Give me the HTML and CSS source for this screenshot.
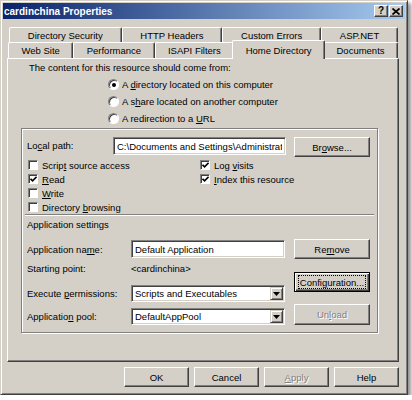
FILE: index.html
```html
<!DOCTYPE html>
<html lang="en">
<head>
    <meta charset="UTF-8">
    <title>cardinchina Properties</title>
    <link rel="stylesheet" href="styles.css">
</head>
<body>
    <div class="window">
        <div class="titlebar">
            <span class="title">cardinchina Properties</span>
            <div class="caption-buttons">
                <span class="cap-btn">?</span>
                <span class="cap-btn">
                    <svg width="8" height="7" viewBox="0 0 8 7"><path d="M0.5 0.5 L7.5 6.5 M7.5 0.5 L0.5 6.5" stroke="#000" stroke-width="1.7"/></svg>
                </span>
            </div>
        </div>

        <div class="tabs">
            <div class="tab-row back">
                <div class="tab">Directory Security</div>
                <div class="tab">HTTP Headers</div>
                <div class="tab">Custom Errors</div>
                <div class="tab">ASP.NET</div>
            </div>
            <div class="tab-row front">
                <div class="tab">Web Site</div>
                <div class="tab">Performance</div>
                <div class="tab">ISAPI Filters</div>
                <div class="tab selected">Home Directory</div>
                <div class="tab">Documents</div>
            </div>
        </div>

        <div class="page">
            <div class="intro">The content for this resource should come from:</div>
            <div class="radios">
                <div class="radio-row"><span class="radio checked"></span><span>A <u>d</u>irectory located on this computer</span></div>
                <div class="radio-row"><span class="radio"></span><span>A s<u>h</u>are located on another computer</span></div>
                <div class="radio-row"><span class="radio"></span><span>A redirection to a <u>U</u>RL</span></div>
            </div>

            <div class="group">
                <div class="path-row">
                    <span class="path-label">Lo<u>c</u>al path:</span>
                    <input class="field path-field" value="C:\Documents and Settings\Administrator\My Documents">
                    <button class="btn">Br<u>o</u>wse...</button>
                </div>

                <div class="checks">
                    <div class="check-col left">
                        <div class="check-row"><span class="checkbox"></span><span>Scrip<u>t</u> source access</span></div>
                        <div class="check-row"><span class="checkbox"><svg width="7" height="7" viewBox="0 0 7 7"><path d="M0.5 2.8 L2.6 4.9 L6.6 0.8" fill="none" stroke="#000" stroke-width="1.7"/></svg></span><span><u>R</u>ead</span></div>
                        <div class="check-row"><span class="checkbox"></span><span><u>W</u>rite</span></div>
                        <div class="check-row"><span class="checkbox"></span><span>Directory <u>b</u>rowsing</span></div>
                    </div>
                    <div class="check-col">
                        <div class="check-row"><span class="checkbox"><svg width="7" height="7" viewBox="0 0 7 7"><path d="M0.5 2.8 L2.6 4.9 L6.6 0.8" fill="none" stroke="#000" stroke-width="1.7"/></svg></span><span>Log <u>v</u>isits</span></div>
                        <div class="check-row"><span class="checkbox"><svg width="7" height="7" viewBox="0 0 7 7"><path d="M0.5 2.8 L2.6 4.9 L6.6 0.8" fill="none" stroke="#000" stroke-width="1.7"/></svg></span><span><u>I</u>ndex this resource</span></div>
                    </div>
                </div>

                <div class="separator"></div>
                <div class="section-label">Application settings</div>

                <div class="app">
                    <div class="app-fields">
                        <div class="app-row name-row">
                            <span class="app-label">Application na<u>m</u>e:</span>
                            <input class="field app-field" value="Default Application">
                        </div>
                        <div class="app-row start-row">
                            <span class="app-label">Starting point:</span>
                            <span class="app-value">&lt;cardinchina&gt;</span>
                        </div>
                        <div class="app-row exec-row">
                            <span class="app-label">Execute <u>p</u>ermissions:</span>
                            <div class="combo">
                                <span class="combo-text">Scripts and Executables</span>
                                <span class="combo-btn"><svg width="7" height="4" viewBox="0 0 7 4"><path d="M0 0 H7 L3.5 4 Z" fill="#000"/></svg></span>
                            </div>
                        </div>
                        <div class="app-row pool-row">
                            <span class="app-label">Applicatio<u>n</u> pool:</span>
                            <div class="combo">
                                <span class="combo-text">DefaultAppPool</span>
                                <span class="combo-btn"><svg width="7" height="4" viewBox="0 0 7 4"><path d="M0 0 H7 L3.5 4 Z" fill="#000"/></svg></span>
                            </div>
                        </div>
                    </div>
                    <div class="app-buttons">
                        <button class="btn remove"><span>Re<u>m</u>ove</span></button>
                        <button class="btn default config"><span class="focus"><span>Confi<u>g</u>uration...</span></span></button>
                        <button class="btn unload" disabled><span>Un<u>l</u>oad</span></button>
                    </div>
                </div>
            </div>
        </div>

        <div class="dialog-buttons">
            <button class="btn">OK</button>
            <button class="btn">Cancel</button>
            <button class="btn" disabled><span><u>A</u>pply</span></button>
            <button class="btn">Help</button>
        </div>
    </div>
</body>
</html>
```

FILE: styles.css
```css
* {
    box-sizing: border-box;
}

body {
    margin: 0;
    background-color: #fff;
    font-family: "Liberation Sans", Arial, sans-serif;
    font-size: 9.5px;
    color: #000;
}

.window {
    width: 408px;
    height: 395px;
    background-color: #d4d0c8;
    border: 1px solid;
    border-color: #d4d0c8 #404040 #404040 #d4d0c8;
    box-shadow: inset 1px 1px #fff, inset -1px -1px #808080, 3px 3px 4px rgba(0, 0, 0, 0.45);
    padding: 2px;
}

.titlebar {
    height: 16px;
    display: flex;
    align-items: center;
    justify-content: space-between;
    padding: 0 2px 0 1px;
    background: linear-gradient(to right, #0a246a, #a6caf0);
}

.title {
    color: #fff;
    font-weight: bold;
    font-size: 10px;
}

.caption-buttons {
    display: flex;
    gap: 1px;
}

.cap-btn {
    width: 14px;
    height: 12px;
    background-color: #d4d0c8;
    border: 1px solid;
    border-color: #fff #404040 #404040 #fff;
    box-shadow: inset -1px -1px #808080;
    display: flex;
    align-items: center;
    justify-content: center;
    font-weight: bold;
    font-size: 10px;
    line-height: 1;
}

/* tabs */
.tabs {
    margin-top: 8px;
}

.tab-row {
    display: flex;
}

.tab-row.back {
    height: 15px;
    margin: 0 7px 0 6px;
}

.tab-row.front {
    height: 16px;
    margin: 0 7px 0 5px;
}

.tab {
    flex: 1 1 auto;
    padding: 0 6px;
    background-color: #d4d0c8;
    border-top: 1px solid #fff;
    border-left: 1px solid #fff;
    border-right: 1px solid #404040;
    border-radius: 2px 2px 0 0;
    box-shadow: inset -1px 0 #808080;
    display: flex;
    align-items: center;
    justify-content: center;
    white-space: nowrap;
}

.tab.selected {
    height: 19px;
    margin: -2px -2px -1px;
    position: relative;
    z-index: 1;
}

/* page */
.page {
    height: 304px;
    margin: 0 6px 0 4px;
    border: 1px solid;
    border-color: #fff #404040 #404040 #fff;
    box-shadow: inset -1px -1px #808080;
    padding-top: 2px;
}

.intro {
    margin-left: 21px;
    line-height: 13px;
}

.radios {
    margin: 2px 0 0 100px;
}

.radio-row {
    height: 17px;
    display: flex;
    align-items: center;
}

.radio {
    width: 11px;
    height: 11px;
    margin-right: 3px;
    border-radius: 50%;
    background-color: #fff;
    border: 1px solid;
    border-color: #808080 #fff #fff #808080;
    box-shadow: inset 1px 1px #404040;
    display: flex;
    align-items: center;
    justify-content: center;
}

.radio.checked::after {
    content: "";
    width: 4px;
    height: 4px;
    border-radius: 50%;
    background-color: #000;
}

.group {
    margin: 1px 20px 0 13px;
    border: 1px solid #808080;
    box-shadow: inset 1px 1px #fff, 1px 1px #fff;
    padding: 8px 0 7px 5px;
}

.path-row {
    display: flex;
    align-items: flex-start;
}

.path-label {
    width: 86px;
    line-height: 18px;
}

.field {
    margin: 0;
    padding: 0 3px;
    font: inherit;
    color: #000;
    background-color: #fff;
    border: 1px solid;
    border-color: #808080 #fff #fff #808080;
    box-shadow: inset 1px 1px #404040, inset -1px -1px #d4d0c8;
    outline: none;
}

.path-field {
    width: 173px;
    height: 18px;
}

.btn {
    width: 76px;
    height: 20px;
    margin: 0;
    padding: 0;
    font: inherit;
    color: #000;
    background-color: #d4d0c8;
    border: 1px solid;
    border-color: #fff #404040 #404040 #fff;
    box-shadow: inset -1px -1px #808080;
    display: flex;
    align-items: center;
    justify-content: center;
}

.btn:disabled {
    color: #808080;
    text-shadow: 1px 1px #fff;
}

.btn.default {
    border-color: #000;
    box-shadow: inset 1px 1px #fff, inset -1px -1px #404040, inset -2px -2px #808080;
}

.focus {
    flex: 1;
    align-self: stretch;
    margin: 2px 3px;
    border: 1px dotted #000;
    display: flex;
    align-items: center;
    justify-content: center;
}

.path-row .btn {
    margin-left: 8px;
}

.checks {
    display: flex;
    margin-top: 1px;
}

.check-col {
    display: flex;
    flex-direction: column;
}

.check-col.left {
    width: 172px;
    margin-left: 1px;
}

.check-row {
    height: 14px;
    display: flex;
    align-items: center;
}

.checkbox {
    width: 10px;
    height: 10px;
    margin-right: 4px;
    background-color: #fff;
    border: 1px solid;
    border-color: #808080 #fff #fff #808080;
    box-shadow: inset 1px 1px #404040;
    display: flex;
    align-items: center;
    justify-content: center;
}

.separator {
    height: 2px;
    margin: 0 3px 0 -2px;
    border-top: 1px solid #808080;
    border-bottom: 1px solid #fff;
}

.section-label {
    margin-top: 2px;
    line-height: 13px;
}

.app {
    display: flex;
    margin-top: 8px;
}

.app-fields {
    width: 258px;
}

.app-row {
    display: flex;
    align-items: center;
}

.app-label {
    width: 104px;
}

.name-row {
    height: 18px;
    margin-top: 1px;
}

.app-field {
    width: 154px;
    height: 18px;
}

.start-row {
    height: 18px;
    margin-top: 1px;
}

.exec-row {
    height: 17px;
    margin-top: 8px;
}

.pool-row {
    height: 17px;
    margin-top: 6px;
}

.combo {
    width: 154px;
    height: 17px;
    padding: 1px;
    background-color: #fff;
    border: 1px solid;
    border-color: #808080 #fff #fff #808080;
    box-shadow: inset 1px 1px #404040, inset -1px -1px #d4d0c8;
    display: flex;
    align-items: center;
}

.combo-text {
    flex: 1;
    padding-left: 2px;
}

.combo-btn {
    width: 13px;
    height: 13px;
    background-color: #d4d0c8;
    border: 1px solid;
    border-color: #d4d0c8 #404040 #404040 #d4d0c8;
    box-shadow: inset 1px 1px #fff, inset -1px -1px #808080;
    display: flex;
    align-items: center;
    justify-content: center;
}

.app-buttons {
    margin-left: 9px;
    display: flex;
    flex-direction: column;
}

.config {
    margin-top: 13px;
}

.unload {
    height: 21px;
    margin-top: 12px;
}

.dialog-buttons {
    display: flex;
    justify-content: flex-end;
    gap: 5px;
    margin: 5px 6px 0 0;
}

.dialog-buttons .btn {
    width: 65px;
}
```
